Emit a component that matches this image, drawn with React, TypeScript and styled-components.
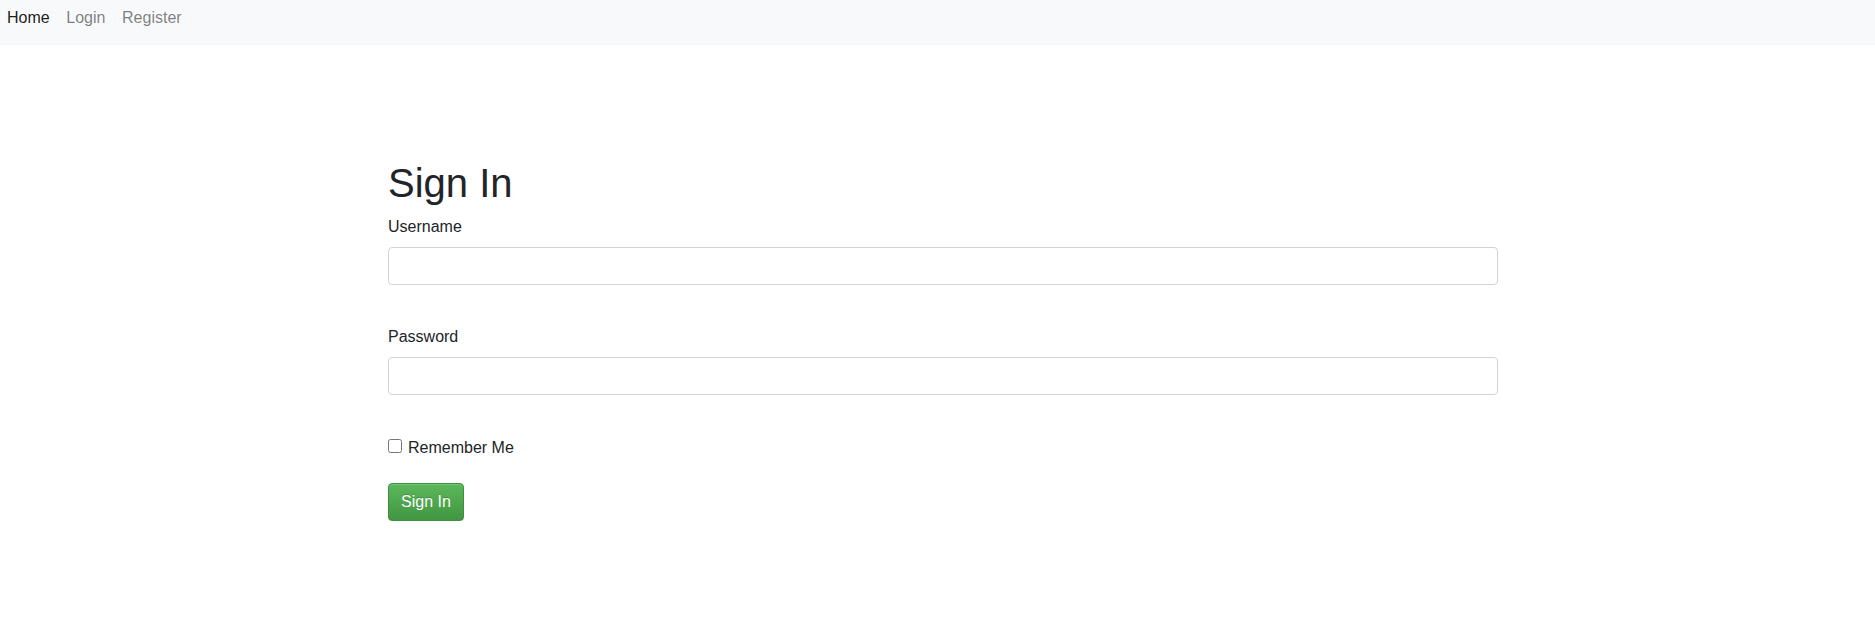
import React from "react";
import styled, { createGlobalStyle } from "styled-components";

const GlobalStyle = createGlobalStyle`
  html, body {
    margin: 0;
    padding: 0;
    background: #ffffff;
  }
  body {
    font-family: "Liberation Sans", Arial, Helvetica, sans-serif;
    font-size: 16px;
    line-height: 24px;
    color: #212529;
  }
  * { box-sizing: border-box; }
`;

const NavBar = styled.nav`
  display: flex;
  align-items: flex-start;
  height: 45px;
  padding: 6px 0 0 7px;
  background: #f8f9fa;
`;

const NavLink = styled.a<{ $active?: boolean }>`
  display: block;
  font-size: 16px;
  line-height: 24px;
  margin-right: 16.6px;
  text-decoration: none;
  color: ${(p) => (p.$active ? "rgba(0,0,0,0.9)" : "rgba(0,0,0,0.5)")};
  cursor: pointer;
`;

const Container = styled.main`
  width: 1110px;
  margin-left: calc(50% - 549.5px);
  padding-top: 114px;
`;

const Title = styled.h1`
  margin: 0 0 8px;
  font-size: 40px;
  line-height: 48px;
  font-weight: 500;
  color: #212529;
`;

const Field = styled.div<{ $gap: number }>`
  margin-bottom: ${(p) => p.$gap}px;
`;

const Label = styled.label`
  display: block;
  font-size: 16px;
  line-height: 24px;
  margin-bottom: 8px;
  color: #212529;
`;

const Input = styled.input`
  display: block;
  width: 100%;
  height: 38px;
  padding: 6px 12px;
  font-family: inherit;
  font-size: 16px;
  line-height: 24px;
  color: #495057;
  background: #fff;
  border: 1px solid #ced4da;
  border-radius: 4px;
  outline: none;
`;

const CheckRow = styled.label`
  display: block;
  font-size: 16px;
  line-height: 24px;
  margin-bottom: 23px;
  color: #212529;
`;

const CheckBox = styled.input`
  margin: 0 6px 2px 0;
  width: 14px;
  height: 14px;
  vertical-align: baseline;
`;

const SubmitButton = styled.button`
  display: inline-block;
  height: 38px;
  padding: 6px 12px;
  font-family: inherit;
  font-size: 16px;
  line-height: 24px;
  color: #fff;
  text-shadow: 0 -1px 0 rgba(0, 0, 0, 0.2);
  background-image: linear-gradient(to bottom, #5cb85c 0%, #419641 100%);
  border: 1px solid #3e8f3e;
  border-radius: 4px;
  box-shadow: inset 0 1px 0 rgba(255, 255, 255, 0.15), 0 1px 1px rgba(0, 0, 0, 0.075);
  cursor: pointer;
`;

export default function App() {
  return (
    <>
      <GlobalStyle />
      <NavBar>
        <NavLink $active>Home</NavLink>
        <NavLink>Login</NavLink>
        <NavLink>Register</NavLink>
      </NavBar>
      <Container>
        <Title>Sign In</Title>
        <form onSubmit={(e) => e.preventDefault()}>
          <Field $gap={40}>
            <Label htmlFor="username">Username</Label>
            <Input id="username" type="text" />
          </Field>
          <Field $gap={41}>
            <Label htmlFor="password">Password</Label>
            <Input id="password" type="password" />
          </Field>
          <CheckRow>
            <CheckBox type="checkbox" />
            Remember Me
          </CheckRow>
          <SubmitButton type="submit">Sign In</SubmitButton>
        </form>
      </Container>
    </>
  );
}
